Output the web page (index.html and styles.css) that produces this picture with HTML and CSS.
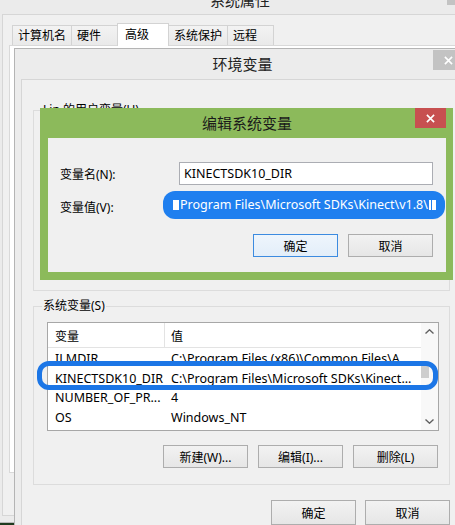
FILE: index.html
```html
<!DOCTYPE html>
<html lang="zh-CN">
<head>
<meta charset="utf-8">
<title>系统属性</title>
<link rel="stylesheet" href="styles.css">
</head>
<body>
<div class="win sys">
  <div class="titlebar">
    <span class="title-text">系统属性</span>
    <span class="close close-gray"><svg viewBox="0 0 10 10"><path d="M1 1L9 9M9 1L1 9"/></svg></span>
  </div>
  <div class="client sys-client">
    <div class="tabs">
      <div class="tab">计算机名</div>
      <div class="tab">硬件</div>
      <div class="tab active">高级</div>
      <div class="tab">系统保护</div>
      <div class="tab">远程</div>
    </div>
    <div class="tabpanel"></div>
  </div>
</div>

<div class="win env">
  <div class="titlebar">
    <span class="title-text">环境变量</span>
    <span class="close close-gray"><svg viewBox="0 0 10 10"><path d="M1 1L9 9M9 1L1 9"/></svg></span>
  </div>
  <div class="client env-client">
    <fieldset class="group user-group">
      <legend>Lin 的用户变量(U)</legend>
      <div class="user-body"></div>
    </fieldset>
    <fieldset class="group sys-group">
      <legend>系统变量(S)</legend>
      <div class="list">
        <div class="list-main">
          <div class="list-head"><span class="c1">变量</span><span class="c2">值</span></div>
          <div class="row"><span class="c1">ILMDIR</span><span class="c2">C:\Program Files (x86)\Common Files\A</span></div>
          <div class="row"><span class="c1">KINECTSDK10_DIR</span><span class="c2">C:\Program Files\Microsoft SDKs\Kinect...</span></div>
          <div class="row"><span class="c1">NUMBER_OF_PR...</span><span class="c2">4</span></div>
          <div class="row"><span class="c1">OS</span><span class="c2">Windows_NT</span></div>
          <div class="row"><span class="c1">Path</span><span class="c2">C:\ProgramData\Oracle\Java\javapath;C:\...</span></div>
        </div>
        <div class="vscroll">
          <span class="arrow"><svg viewBox="0 0 9 5"><path d="M0.5 4.5L4.5 0.8L8.5 4.5"/></svg></span>
          <span class="track"><span class="thumb"></span></span>
          <span class="arrow"><svg viewBox="0 0 9 5"><path d="M0.5 0.5L4.5 4.2L8.5 0.5"/></svg></span>
        </div>
      </div>
      <div class="btn-row group-btns">
        <button class="btn">新建(W)...</button>
        <button class="btn">编辑(I)...</button>
        <button class="btn">删除(L)</button>
      </div>
    </fieldset>
    <div class="btn-row env-btns">
      <button class="btn">确定</button>
      <button class="btn">取消</button>
    </div>
  </div>
</div>

<div class="win edit">
  <div class="titlebar">
    <span class="title-text">编辑系统变量</span>
    <span class="close close-red"><svg viewBox="0 0 10 10"><path d="M1 1L9 9M9 1L1 9"/></svg></span>
  </div>
  <div class="client edit-client">
    <div class="field-row"><label class="field-label">变量名(N):</label><div class="input">KINECTSDK10_DIR</div></div>
    <div class="field-row"><label class="field-label">变量值(V):</label><div class="input input-selected"><span class="sel-block"></span><span class="sel-text">Program Files\Microsoft SDKs\Kinect\v1.8\</span><span class="sel-end"></span><span class="sel-end2"></span></div></div>
    <div class="btn-row edit-btns">
      <button class="btn default">确定</button>
      <button class="btn">取消</button>
    </div>
  </div>
</div>

<div class="mark ring"></div>
</body>
</html>
```

FILE: styles.css
```css
* { box-sizing: border-box; }
html, body { margin: 0; padding: 0; }
body {
  width: 455px;
  height: 525px;
  overflow: hidden;
  position: relative;
  background: #1f3b1f;
  font-family: "Noto Sans", "Noto Sans CJK SC", sans-serif;
  font-size: 12px;
  color: #000;
}

.win { position: absolute; display: flex; flex-direction: column; }

.titlebar {
  display: grid;
  grid-template-columns: 1fr auto 1fr;
  align-items: center;
  height: 30px;
  flex: none;
}
.title-text {
  grid-column: 2;
  font-family: "Noto Sans CJK SC", sans-serif;
  font-size: 15px;
  line-height: 20px;
  color: #222;
}
.close {
  grid-column: 3;
  justify-self: end;
  align-self: start;
  width: 31px;
  height: 20px;
  display: flex;
  align-items: center;
  justify-content: center;
}
.close svg { width: 9px; height: 9px; }
.close path { stroke: #fff; stroke-width: 1.8; fill: none; }
.close-gray { background: #c3c3c3; }
.close-red { background: #c75050; }

.client {
  flex: 1;
  background: #f0f0f0;
  border: 1px solid #d6d6d6;
}

/* System properties window */
.sys {
  left: -5px;
  top: -16px;
  width: 490px;
  height: 539px;
  border: 1px solid #b9b9b9;
  background: #ebebeb;
  padding: 0 6px 6px;
}
.sys .titlebar { height: 29px; }
.sys-client { display: flex; flex-direction: column; }
.tabs {
  display: flex;
  align-items: flex-end;
  height: 30px;
  padding-left: 9px;
}
.tab {
  height: 20px;
  min-width: 47px;
  padding: 1px 5px 0;
  margin-right: -1px;
  border: 1px solid #d3d3d3;
  border-bottom: none;
  background: linear-gradient(#f3f3f3, #e9e9e9);
  font-family: "Noto Sans CJK SC", sans-serif;
  font-size: 12px;
  line-height: 16px;
  white-space: nowrap;
}
.tab.active {
  position: relative;
  z-index: 1;
  height: 23px;
  margin-bottom: -1px;
  min-width: 52px;
  padding: 2px 7px 0;
  background: #fff;
}
.tabpanel {
  height: 428px;
  margin-left: 6px;
  margin-right: 6px;
  border: 1px solid #d9d9d9;
  background: #fff;
}

/* Environment variables window */
.env {
  left: 14px;
  top: 48px;
  width: 457px;
  height: 500px;
  border: 1px solid #b4b4b4;
  background: #ececec;
  padding: 0 6px 6px;
}
.env .close { margin-top: 1px; }
.env-client {
  display: flex;
  flex-direction: column;
  padding: 22px 13px 0 11px;
}
.group {
  margin: 0;
  min-width: 0;
  border: 1px solid #dcdcdc;
  padding: 0 11px 0 13px;
}
.group legend {
  padding: 0 1px;
  margin-left: -5px;
  font-size: 12px;
  line-height: 16px;
  font-family: "Noto Sans", "Noto Sans CJK SC", sans-serif;
}
.user-body { height: 172px; }
.sys-group { margin-top: 7px; padding-bottom: 16px; }

.list {
  display: flex;
  height: 109px;
  margin-top: 8px;
  margin-right: -1px;
  border: 1px solid #a7a7a7;
  background: #fff;
  overflow: hidden;
}
.list-main { flex: 1; min-width: 0; }
.list-head {
  display: flex;
  height: 25px;
  margin-bottom: 1px;
  border-bottom: 1px solid #e3e3e3;
  align-items: center;
  font-family: "Noto Sans CJK SC", sans-serif;
}
.list-head .c1 { border-right: 1px solid #e3e3e3; height: 100%; display: flex; align-items: center; }
.row { display: flex; height: 19.5px; align-items: center; white-space: nowrap; }
.c1 { width: 117px; flex: none; padding-left: 7px; overflow: hidden; }
.c2 { padding-left: 6px; white-space: nowrap; }
.row, .input { font-size: 12.5px; }

.vscroll {
  width: 17px;
  flex: none;
  background: #f8f8f8;
  display: flex;
  flex-direction: column;
}
.arrow { height: 17px; display: flex; align-items: center; justify-content: center; flex: none; }
.arrow svg { width: 9px; height: 5px; }
.arrow path { stroke: #606060; stroke-width: 1.4; fill: none; }
.track { flex: 1; padding-top: 23px; }
.thumb { display: block; width: 8px; height: 15px; background: #cdcdcd; }

.btn-row { display: flex; justify-content: flex-end; }
.btn {
  width: 85px;
  height: 23px;
  margin: 0;
  padding: 0;
  border: 1px solid #adadad;
  background: linear-gradient(#f2f2f2, #e6e6e6);
  font-family: "Noto Sans", "Noto Sans CJK SC", sans-serif;
  font-size: 12px;
  color: #000;
}
.btn.default { border-color: #3c8be0; background: linear-gradient(#eef5fc, #e3eef9); }
.group-btns { gap: 10px; margin-top: 14px; }
.env-btns { gap: 9px; margin-top: 15px; }
.env-btns .btn { height: 25px; }

/* Edit dialog */
.edit {
  left: 40px;
  top: 108px;
  width: 413px;
  height: 172px;
  background: #8cba5b;
  padding: 0 7px 8px 8px;
}
.edit .title-text { color: #1a1a1a; }
.edit-client {
  border: none;
  display: flex;
  flex-direction: column;
  padding: 24px 13px 15px 12px;
}
.field-row {
  display: grid;
  grid-template-columns: 119px 1fr;
  align-items: center;
  height: 23px;
}
.field-row + .field-row { margin-top: 10px; }
.field-label { font-size: 12px; }
.input {
  height: 23px;
  border: 1px solid #abadb3;
  background: #fff;
  padding-left: 4px;
  line-height: 21px;
  white-space: nowrap;
  overflow: hidden;
}
/* selected value, marked with a blue highlight */
.input.input-selected {
  align-self: start;
  height: 28px;
  margin: -4px -12px 0 -16px;
  padding-left: 10px;
  border: none;
  border-radius: 12px;
  background: #1f7fef;
  color: #fff;
  display: flex;
  align-items: center;
  overflow: visible;
}
.sel-block { width: 6px; height: 10px; background: #fff; margin-right: 1px; flex: none; }
.sel-text { line-height: 16px; }
.sel-end { width: 2px; height: 10px; background: #fff; margin-left: 1px; flex: none; }
.sel-end2 { width: 4px; height: 10px; background: #fff; margin-left: 1px; flex: none; }
.edit-btns { gap: 10px; margin-top: 16px; }

/* annotation ring drawn over the list row */
.mark { position: absolute; }
.ring {
  left: 37px;
  top: 361px;
  width: 401px;
  height: 29px;
  border: 5px solid #1c76e6;
  border-radius: 12px;
}
```
